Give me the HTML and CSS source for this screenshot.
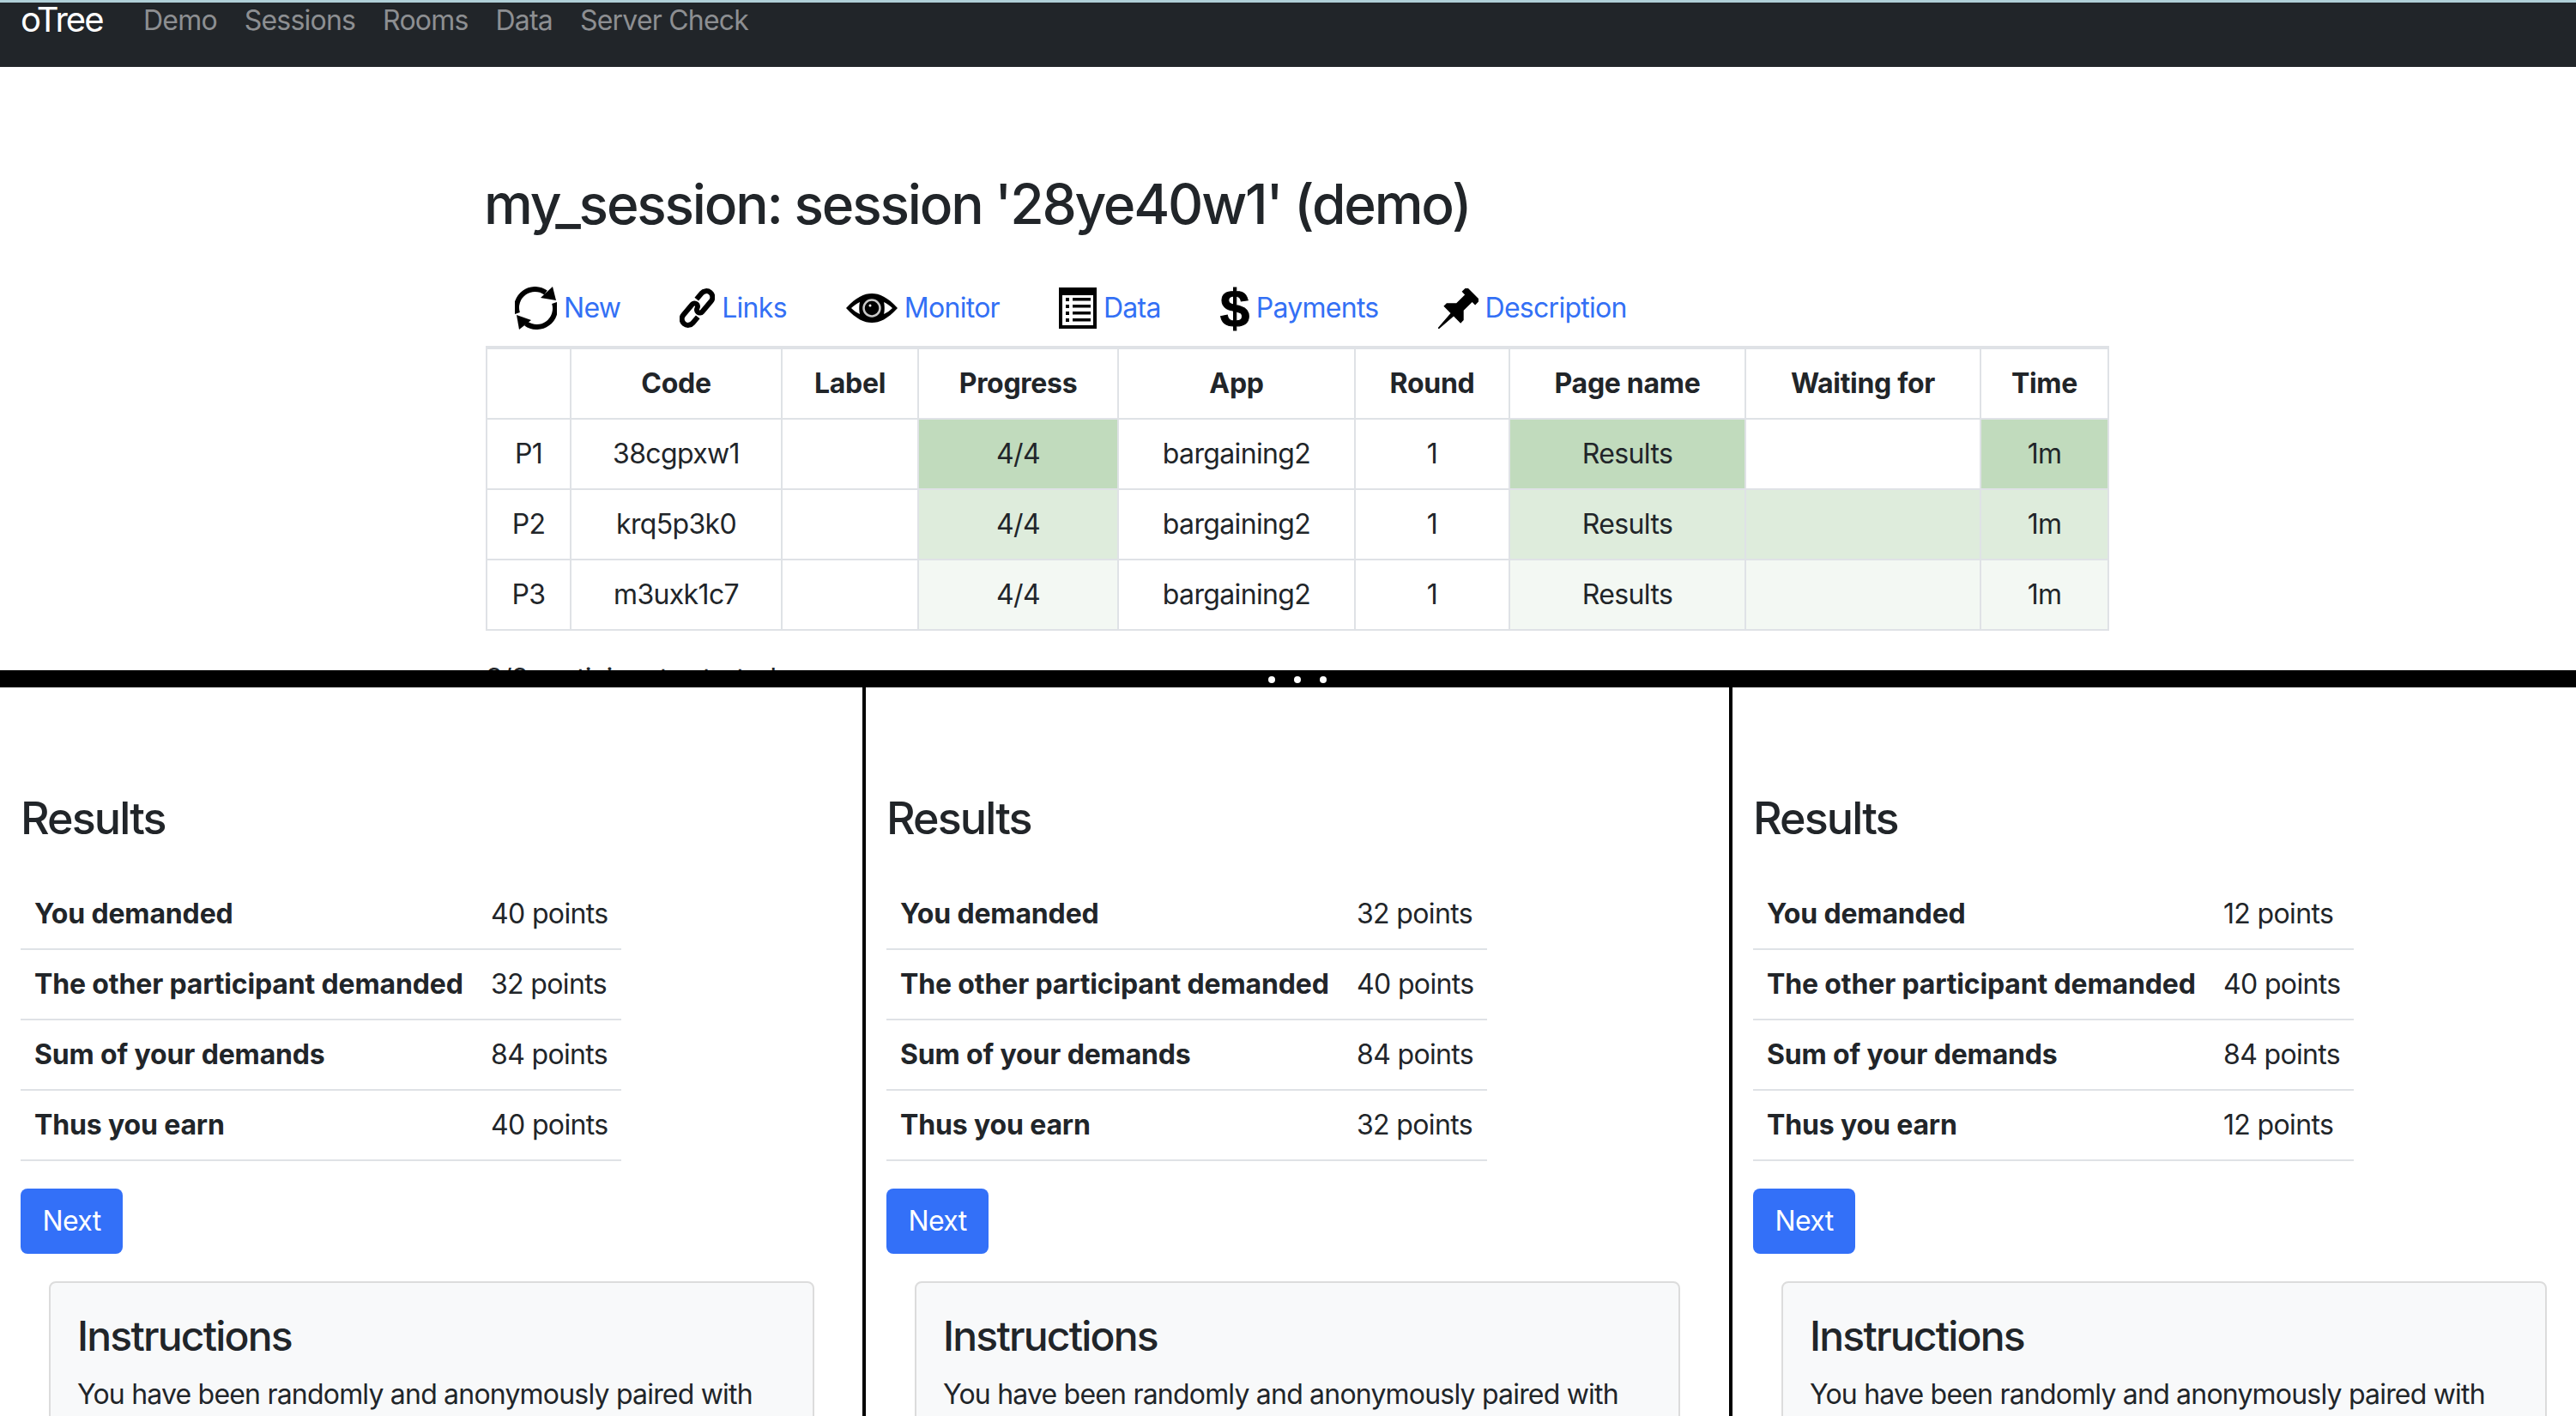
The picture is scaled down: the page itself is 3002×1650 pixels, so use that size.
FILE: index.html
```html
<!DOCTYPE html>
<html lang="en">
<head>
  <meta charset="UTF-8" />
  <title>oTree session</title>
  <link rel="stylesheet" href="styles.css">
</head>
<body>
  <div class="top-pane">
    <nav class="navbar">
      <span class="brand">oTree</span>
      <a class="nav-link">Demo</a>
      <a class="nav-link">Sessions</a>
      <a class="nav-link">Rooms</a>
      <a class="nav-link">Data</a>
      <a class="nav-link">Server Check</a>
    </nav>

    <div class="session">
      <h1>my_session: session '28ye40w1' (demo)</h1>

      <div class="actions">
        <a class="action">
          <svg class="icon icon-new" viewBox="0 0 49 50">
            <path class="ring" d="M3 31A21.5 21.5 0 0 1 36 7" />
            <path d="M44 0L48 16L30 13Z" />
            <path class="ring" d="M46 19A21.5 21.5 0 0 1 13 43" />
            <path d="M2 33L5 50L19 39Z" />
          </svg>
          New
        </a>
        <a class="action">
          <svg class="icon icon-links" viewBox="0 0 41 46">
            <g transform="rotate(-50 20.5 23)">
              <path class="ring" d="M13 30.25H4a7.25 7.25 0 0 1 0-14.5H20a3.6 3.6 0 0 1 0 7.25" />
              <path class="ring" d="M28 15.75H37a7.25 7.25 0 0 1 0 14.5H21a3.6 3.6 0 0 1 0-7.25" />
            </g>
          </svg>
          Links
        </a>
        <a class="action">
          <svg class="icon icon-eye" viewBox="0 0 60 34">
            <path d="M0 17C12 4 21 0 30 0S48 4 60 17C48 30 39 34 30 34S12 30 0 17Z" />
            <path class="white" d="M6 17C9 14 12 12 16 10C15 14 15 20 16 24C12 22 9 20 6 17ZM54 17C51 14 48 12 44 10C45 14 45 20 44 24C48 22 51 20 54 17Z" />
            <circle class="eye-ring" cx="30" cy="17" r="9.5" />
            <circle class="white" cx="28" cy="14" r="1.5" />
          </svg>
          Monitor
        </a>
        <a class="action">
          <svg class="icon icon-data" viewBox="0 0 44 48">
            <rect width="44" height="48" />
            <rect class="white" x="4" y="9" width="36" height="35" />
            <rect x="8" y="12" width="4" height="4" />
            <rect x="16" y="12" width="21" height="3.5" />
            <rect x="8" y="20" width="4" height="4" />
            <rect x="16" y="20" width="21" height="3.5" />
            <rect x="8" y="28" width="4" height="4" />
            <rect x="16" y="28" width="21" height="3.5" />
            <rect x="8" y="36" width="4" height="4" />
            <rect x="16" y="36" width="21" height="3.5" />
          </svg>
          Data
        </a>
        <a class="action">
          <span class="icon-dollar">$</span>
          Payments
        </a>
        <a class="action">
          <svg class="icon icon-pin" viewBox="0 0 47 47">
            <g transform="translate(0 47) rotate(45)">
              <path d="M-.8 0L.8 0L2.5 -23L14 -23L14 -28L6 -36L6 -50L11 -50L11 -58L-11 -58L-11 -50L-6 -50L-6 -36L-14 -28L-14 -23L-2.5 -23Z" />
            </g>
          </svg>
          Description
        </a>
      </div>

      <table class="monitor">
        <colgroup>
          <col class="c-id"><col class="c-code"><col class="c-label"><col class="c-progress"><col class="c-app">
          <col class="c-round"><col class="c-page"><col class="c-wait"><col class="c-time">
        </colgroup>
        <thead>
          <tr>
            <th></th><th>Code</th><th>Label</th><th>Progress</th><th>App</th>
            <th>Round</th><th>Page name</th><th>Waiting for</th><th>Time</th>
          </tr>
        </thead>
        <tbody>
          <tr class="fresh">
            <td>P1</td><td>38cgpxw1</td><td></td><td class="g">4/4</td><td>bargaining2</td>
            <td>1</td><td class="g">Results</td><td></td><td class="g">1m</td>
          </tr>
          <tr class="mid">
            <td>P2</td><td>krq5p3k0</td><td></td><td class="g">4/4</td><td>bargaining2</td>
            <td>1</td><td class="g">Results</td><td class="g"></td><td class="g">1m</td>
          </tr>
          <tr class="old">
            <td>P3</td><td>m3uxk1c7</td><td></td><td class="g">4/4</td><td>bargaining2</td>
            <td>1</td><td class="g">Results</td><td class="g"></td><td class="g">1m</td>
          </tr>
        </tbody>
      </table>

      <p class="started">3/3 participants started</p>
    </div>
  </div>

  <div class="divider">
    <span class="dot"></span><span class="dot"></span><span class="dot"></span>
  </div>

  <div class="players">
    <section class="player first">
      <h2>Results</h2>
      <table class="results">
        <tr><th>You demanded</th><td>40 points</td></tr>
        <tr><th>The other participant demanded</th><td>32 points</td></tr>
        <tr><th>Sum of your demands</th><td>84 points</td></tr>
        <tr><th>Thus you earn</th><td>40 points</td></tr>
      </table>
      <button class="btn-next">Next</button>
      <div class="card">
        <h3>Instructions</h3>
        <p>You have been randomly and anonymously paired with</p>
      </div>
    </section>

    <section class="player second">
      <h2>Results</h2>
      <table class="results">
        <tr><th>You demanded</th><td>32 points</td></tr>
        <tr><th>The other participant demanded</th><td>40 points</td></tr>
        <tr><th>Sum of your demands</th><td>84 points</td></tr>
        <tr><th>Thus you earn</th><td>32 points</td></tr>
      </table>
      <button class="btn-next">Next</button>
      <div class="card">
        <h3>Instructions</h3>
        <p>You have been randomly and anonymously paired with</p>
      </div>
    </section>

    <section class="player third">
      <h2>Results</h2>
      <table class="results">
        <tr><th>You demanded</th><td>12 points</td></tr>
        <tr><th>The other participant demanded</th><td>40 points</td></tr>
        <tr><th>Sum of your demands</th><td>84 points</td></tr>
        <tr><th>Thus you earn</th><td>12 points</td></tr>
      </table>
      <button class="btn-next">Next</button>
      <div class="card">
        <h3>Instructions</h3>
        <p>You have been randomly and anonymously paired with</p>
      </div>
    </section>
  </div>
</body>
</html>
```

FILE: styles.css
```css
* {
  box-sizing: border-box;
}

html,
body {
  height: 100%;
}

body {
  margin: 0;
  display: flex;
  flex-direction: column;
  overflow: hidden;
  background-color: #fff;
  color: #212529;
  font-family: Inter, "Liberation Sans", sans-serif;
  font-size: 32px;
  line-height: 48px;
  letter-spacing: -0.65px;
}

/* top pane */
.top-pane {
  height: 781px;
  flex: none;
  overflow: hidden;
}

.navbar {
  height: 78px;
  display: flex;
  align-items: flex-start;
  padding: 0 0 0 24px;
  background-color: #212529;
  border-top: 3px solid #b0d0d8;
}

.brand {
  width: 94px;
  color: #fff;
  font-size: 40px;
  line-height: 40px;
  letter-spacing: -2px;
  margin-right: 33px;
}

.nav-link {
  color: #8d8f92;
  line-height: 40px;
  letter-spacing: -0.8px;
  padding: 0 16px;
  margin-top: 1px;
}

.session {
  padding: 122px 0 0 566px;
}

h1 {
  margin: 0 0 56px -2px;
  font-size: 64px;
  font-weight: 500;
  line-height: 76px;
  letter-spacing: -2.2px;
}

.actions {
  display: flex;
  align-items: center;
  gap: 69px;
  height: 54px;
  padding-left: 34px;
  margin-bottom: 17px;
  letter-spacing: -0.72px;
}

.action {
  display: flex;
  align-items: center;
  gap: 8px;
  color: #3370f5;
}

.icon {
  display: block;
  flex: none;
  fill: #000;
}

.icon-new { width: 49px; height: 50px; }
.icon-links { width: 41px; height: 46px; }
.icon-eye { width: 60px; height: 34px; }
.icon-data { width: 44px; height: 48px; }
.icon-pin { width: 47px; height: 47px; }

.ring {
  fill: none;
  stroke: #000;
  stroke-width: 6;
}

.white {
  fill: #fff;
}

.eye-ring {
  fill: #000;
  stroke: #c9c9c9;
  stroke-width: 2.5;
}

.icon-dollar {
  width: 34px;
  color: #000;
  font-family: "Liberation Sans", sans-serif;
  font-size: 62px;
  font-weight: 700;
  line-height: 54px;
  letter-spacing: 0;
  text-align: center;
  -webkit-text-stroke: 1px #000;
}

/* participant table */
.monitor {
  width: 1890px;
  table-layout: fixed;
  border-collapse: collapse;
}

.c-id { width: 98px; }
.c-code { width: 246px; }
.c-label { width: 159px; }
.c-progress { width: 233px; }
.c-app { width: 276px; }
.c-round { width: 180px; }
.c-page { width: 275px; }
.c-wait { width: 274px; }
.c-time { width: 149px; }

.monitor th,
.monitor td {
  height: 82px;
  padding: 16px;
  border: 2px solid #dfe2e6;
  text-align: center;
}

.monitor th {
  font-weight: 700;
  letter-spacing: -0.3px;
  border-top-width: 4px;
}

.fresh .g { background-color: #c1dbbd; }
.mid .g { background-color: #deecdc; }
.old .g { background-color: #f3f8f3; }

.started {
  margin: 32px 0 0 0;
}

/* divider between panes */
.divider {
  height: 20px;
  flex: none;
  display: flex;
  align-items: center;
  justify-content: center;
  gap: 22px;
  padding: 2px 0 0 22px;
  background-color: #000;
}

.dot {
  width: 8px;
  height: 8px;
  border-radius: 50%;
  background-color: #fff;
}

/* player frames */
.players {
  flex: 1;
  display: flex;
  overflow: hidden;
}

.player {
  padding: 118px 0 0 24px;
  overflow: hidden;
}

.first {
  width: 1005px;
}

.second {
  width: 1010px;
  border-left: 4px solid #000;
}

.third {
  flex: 1;
  border-left: 4px solid #000;
}

h2 {
  margin: 0 0 36px 0;
  font-size: 52px;
  font-weight: 500;
  line-height: 69px;
  letter-spacing: -1.9px;
}

.results {
  width: 700px;
  table-layout: fixed;
  border-collapse: collapse;
}

.results th,
.results td {
  height: 82px;
  padding: 16px;
  border-bottom: 2px solid #dfe2e6;
  text-align: left;
  white-space: nowrap;
}

.results th {
  width: 532px;
  font-weight: 700;
  letter-spacing: -0.15px;
}

.btn-next {
  display: block;
  width: 119px;
  height: 76px;
  margin-top: 32px;
  padding: 0;
  border: none;
  border-radius: 8px;
  background-color: #3370f8;
  color: #fff;
  font: inherit;
  letter-spacing: inherit;
}

.card {
  width: 892px;
  margin: 32px 0 0 33px;
  padding: 32px 32px 32px 31px;
  border: 2px solid #dcdcdc;
  border-radius: 8px;
  background-color: #f8f9fa;
}

h3 {
  margin: 0 0 14px 0;
  font-size: 48px;
  font-weight: 500;
  line-height: 60px;
  letter-spacing: -1.8px;
}

.card p {
  margin: 0;
  letter-spacing: -0.8px;
}
```
